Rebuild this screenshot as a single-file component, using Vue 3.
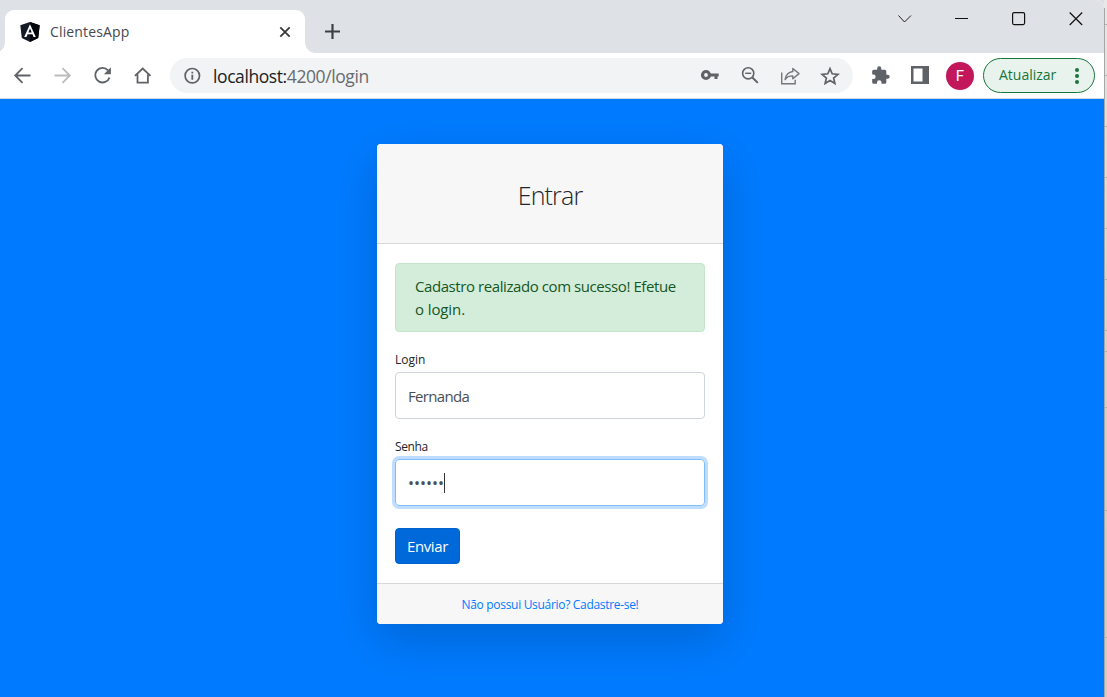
<script setup>
import { ref } from 'vue'

const login = ref('Fernanda')
const password = '••••••'
const edgeRows = [24, 75, 126, 177, 228, 279, 330, 351, 407, 510, 637]
</script>

<template>
  <div class="screen">
    <div class="browser">
      <header class="tabstrip">
        <div class="tab">
          <svg class="logo" width="20" height="20" viewBox="0 0 20 20">
            <path d="M10 0 19.7 3.3 18.2 16 10 20 1.8 16 .3 3.3Z" fill="#151b26" />
            <path d="M10 0 19.7 3.3 18.2 16 10 20Z" fill="#02050b" />
            <path d="M10 2.3 4.2 15h2.200l1.200-2.800h4.800l1.200 2.800h2.200Zm0 4.100 1.700 4H8.300Z" fill="#fff" fill-rule="evenodd" />
          </svg>
          <span class="tab-title"><span class="t t-tab">ClientesApp</span></span>
          <svg class="tab-close" width="12" height="12" viewBox="0 0 12 12" fill="none" stroke="#35383c" stroke-width="1.8">
            <path d="M1.3 1.3 10.7 10.7M10.7 1.3 1.3 10.7" />
          </svg>
        </div>
        <svg class="plus" width="16" height="16" viewBox="0 0 16 16" fill="none" stroke="#3c4043" stroke-width="2.2">
          <path d="M7.5 0v15M0 7.500h15" />
        </svg>
        <div class="controls">
          <svg width="14" height="14" viewBox="0 0 14 14" fill="none" stroke="#202124"><path d="M.5 3.500 6.500 10l6.500-6.500" /></svg>
          <svg width="14" height="14" viewBox="0 0 14 14" fill="none" stroke="#111"><path d="M0 6.500h13" /></svg>
          <svg width="14" height="14" viewBox="0 0 14 14" fill="none" stroke="#111" stroke-width="1.200"><rect x=".6" y=".6" width="12" height="12" rx="1.500" /></svg>
          <svg width="14" height="14" viewBox="0 0 14 14" fill="none" stroke="#111" stroke-width="1.200"><path d="M.7.500 13.200 13M13.200.500.700 13" /></svg>
        </div>
      </header>

      <nav class="toolbar">
        <div class="nav-icons">
          <svg width="20" height="20" viewBox="-.5 .5 20 20" fill="none" stroke="#5f6368" stroke-width="1.800"><path d="M18 10H3M10 2.700 2.700 10l7.300 7.300" /></svg>
          <svg width="20" height="20" viewBox="-.5 .5 20 20" fill="none" stroke="#babcbe" stroke-width="1.800"><path d="M2 10h15M10 2.700 17.300 10 10 17.300" /></svg>
          <svg width="20" height="20" viewBox="-.7 .7 20 20" fill="none" stroke="#5f6368" stroke-width="1.900"><path d="M16.800 12.200A7.300 7.300 0 1 1 15.300 5" /><path d="M18.200 2v7h-7Z" fill="#5f6368" stroke="none" /></svg>
          <svg width="20" height="20" viewBox="-.7 .5 20 20" fill="none" stroke="#5f6368" stroke-width="1.800"><path d="M2.200 10.300 10 3l7.800 7.300M4.800 9v8.100h10.400V9" /></svg>
        </div>
        <div class="address">
          <svg class="info" width="18" height="18" viewBox="-.3 .3 18 18" fill="none" stroke="#5f6368"><circle cx="9" cy="9" r="7.200" stroke-width="1.700" /><path d="M9 8v5M9 5v1.700" stroke-width="1.800" /></svg>
          <span class="url"><span class="t t-url">localhost:<i>4200/login</i></span></span>
          <div class="address-icons">
            <svg width="20" height="20" viewBox="0 .5 20 20" fill="none" stroke="#5f6368"><circle cx="6" cy="9.500" r="3.500" stroke-width="3.200" /><path d="M9 9.500h9.700M16 9.500v4" stroke-width="3" /></svg>
            <svg width="20" height="20" viewBox="0 .5 20 20" fill="none" stroke="#5f6368"><circle cx="8.200" cy="7.800" r="5.600" stroke-width="1.600" /><path d="m12.400 12 5.400 5.400" stroke-width="2" /><path d="M5.200 7.800h6" stroke-width="1.400" /></svg>
            <svg width="20" height="20" viewBox="0 0 20 20" fill="none" stroke="#74777b" stroke-width="1.400"><path d="M1.700 6.500v11.300h13.500v-4" /><path d="M12.800 2.500 19 7.600l-6.200 5.200V9.900c-4 0-6.100 1.100-7.700 3.800.6-4.300 3.100-7.600 7.700-8.200Z" stroke-linejoin="round" /></svg>
            <svg width="20" height="20" viewBox="0 0 20 20" fill="none" stroke="#5f6368" stroke-width="1.700"><path d="m10 2.600 2.200 5.200 5.700.5-4.300 3.700 1.300 5.500-4.900-2.900-4.900 2.900L6.400 12 2.100 8.300l5.700-.5Z" /></svg>
          </div>
        </div>
        <div class="actions">
          <svg width="20" height="20" viewBox="-.6 .6 24 24" fill="#5f6368"><path d="M20.500 11H19V7a2 2 0 0 0-2-2h-4V3.500a2.500 2.500 0 0 0-5 0V5H4a2 2 0 0 0-2 2v3.800h1.500a2.700 2.700 0 0 1 0 5.400H2V20a2 2 0 0 0 2 2h3.800v-1.500a2.700 2.700 0 0 1 5.400 0V22H17a2 2 0 0 0 2-2v-4h1.500a2.500 2.500 0 0 0 0-5Z" /></svg>
          <svg width="20" height="20" viewBox="0 1 20 20"><path d="M1 1h18v18H1ZM3.500 3.500v13h9v-13Z" fill="#5f6368" fill-rule="evenodd" /></svg>
          <span class="avatar">F</span>
        </div>
        <button class="update"><span class="t t-update">Atualizar</span><svg width="4" height="18" viewBox="0 0 4 18" fill="#16763a"><circle cx="2" cy="3" r="2" /><circle cx="2" cy="9" r="2" /><circle cx="2" cy="15" r="2" /></svg></button>
      </nav>

      <main class="page">
        <section class="card">
          <div class="card-header"><h1 class="t t-heading">Entrar</h1></div>
          <form class="card-body" @submit.prevent>
            <div class="alert"><span class="t t-alert1">Cadastro realizado com sucesso! Efetue</span><br><span class="t t-alert2">o login.</span></div>
            <label><span class="t">Login</span></label>
            <div class="field"><span class="t t-value">{{ login }}</span></div>
            <label><span class="t t-senha">Senha</span></label>
            <div class="field focus"><span class="dots">{{ password }}</span><span class="caret"></span></div>
            <button class="submit"><span class="t t-send">Enviar</span></button>
          </form>
          <footer class="card-footer"><a class="t t-link">Não possui Usuário? Cadastre-se!</a></footer>
        </section>
      </main>
    </div>
    <svg class="edge" width="3" height="697" viewBox="0 0 3 697">
      <path d="M.5 8v689" stroke="#a9a7a6" />
      <path v-for="y in edgeRows" :key="y" :d="`M1 ${y + 0.5}h2`" stroke="#b5b1b0" />
    </svg>
  </div>
</template>

<style>
body { margin: 0; overflow: hidden; }
</style>

<style scoped>
* { box-sizing: border-box; }
.screen { width: 1107px; height: 697px; display: flex; background: #dedede; font-family: "Open Sans", "Noto Sans", sans-serif; }
.browser { width: 1104px; height: 697px; border-radius: 0 8px 0 0; overflow: hidden; background: #fff; display: flex; flex-direction: column; }
.edge { background: linear-gradient(#e8e8e8, #d5d3d1 50%, #cfcdcb); }
svg { display: block; flex: none; }
.t { display: inline-block; white-space: nowrap; }
.tabstrip { height: 53px; flex: none; background: #dee1e6; display: flex; }
.tab { width: 300px; height: 43px; margin: 10px 0 0 5px; border-radius: 9px 9px 0 0; background: #fff; display: flex; align-items: center; padding: 0 14px 0 15px; position: relative; }
.tab::before, .tab::after { content: ""; position: absolute; bottom: 0; width: 10px; height: 10px; }
.tab::before { left: -10px; background: radial-gradient(circle at 0 0, #dee1e6 9.5px, #fff 10px); }
.tab::after { right: -10px; background: radial-gradient(circle at 100% 0, #dee1e6 9.5px, #fff 10px); }
.tab-title { margin-left: 10px; flex: 1; font-size: 14px; color: #45494d; }
.t-tab { letter-spacing: .15px; }
.plus { margin: 24px 0 0 20px; }
.controls { margin: 12px 21px 0 auto; display: flex; gap: 43px; }
.toolbar { height: 46px; flex: none; border-bottom: 1px solid #d5d8dc; display: flex; align-items: center; padding: 0 9px 0 12px; }
.nav-icons { display: flex; gap: 20px; }
.address { margin-left: 18px; width: 683px; height: 35px; background: #f1f3f4; border-radius: 18px; display: flex; align-items: center; padding: 0 13px; }
.url { margin-left: 12px; font-size: 17.5px; line-height: 24px; color: #202124; flex: 1; }
.t-url { letter-spacing: -.41px; }
.url i { font-style: normal; color: #686c70; }
.address-icons { display: flex; gap: 20px; }
.actions { display: flex; gap: 20px; align-items: center; margin-left: 17px; }
.avatar { width: 28px; height: 28px; border-radius: 50%; background: #c2185b; color: #fff; font: 15px/28px Roboto, sans-serif; text-align: center; margin-left: -4px; }
.update { width: 112px; height: 35px; margin-left: auto; border: 1px solid #16763a; border-radius: 18px; background: #e8f3ed; color: #16763a; font-family: inherit; font-size: 14px; padding: 0 15px 0 15px; display: flex; align-items: center; justify-content: space-between; }
.t-update { padding-bottom: 2px; }
.page { flex: 1; background: #007bff; display: flex; justify-content: center; align-items: flex-start; padding: 45px 4px 0 0; }
.card { width: 346px; height: 480px; background: #fff; border-radius: 4px; overflow: hidden; box-shadow: 0 16px 48px rgba(0, 0, 0, .175); display: flex; flex-direction: column; }
.card-header { height: 100px; background: #f7f7f7; border-bottom: 1px solid #d8d8d8; display: flex; justify-content: center; align-items: center; padding-top: 2px; }
h1 { margin: 0; font-size: 25px; font-weight: 300; line-height: 32px; color: #212529; }
.t-heading { letter-spacing: -.85px; }
.card-body { flex: 1; padding: 19px 18px 0; }
.alert { height: 69px; background: #d4edda; border: 1px solid #c3e6cb; border-radius: 4px; color: #155724; font-size: 15px; line-height: 23px; padding: 11px 19px; }
.t-alert1 { letter-spacing: -.42px; }
.t-alert2 { letter-spacing: -.1px; }
label { display: block; font-size: 12px; line-height: 18px; color: #212529; margin: 19px 0 3px; }
.t-senha { letter-spacing: -.4px; }
.field { height: 47px; border: 1px solid #ced4da; border-radius: 4px; padding: 0 12px; display: flex; align-items: center; font-size: 15px; color: #495057; }
.t-value { letter-spacing: -.68px; }
.focus { border-color: #80bdff; box-shadow: 0 0 0 3px #bfdeff; }
.dots { font-size: 16px; line-height: 20px; letter-spacing: -.02px; }
.caret { width: 1px; height: 20px; background: #333; }
.submit { margin: 22px 0 0; width: 65px; height: 36px; padding: 0; border: 1px solid #0062cc; border-radius: 4px; background: #0069d9; color: #fff; font-family: inherit; font-size: 15px; }
.t-send { letter-spacing: -.4px; }
.card-footer { height: 41px; background: #f7f7f7; border-top: 1px solid #d8d8d8; display: flex; align-items: center; justify-content: center; font-size: 12px; color: #007bff; }
.t-link { letter-spacing: -.31px; }
</style>
